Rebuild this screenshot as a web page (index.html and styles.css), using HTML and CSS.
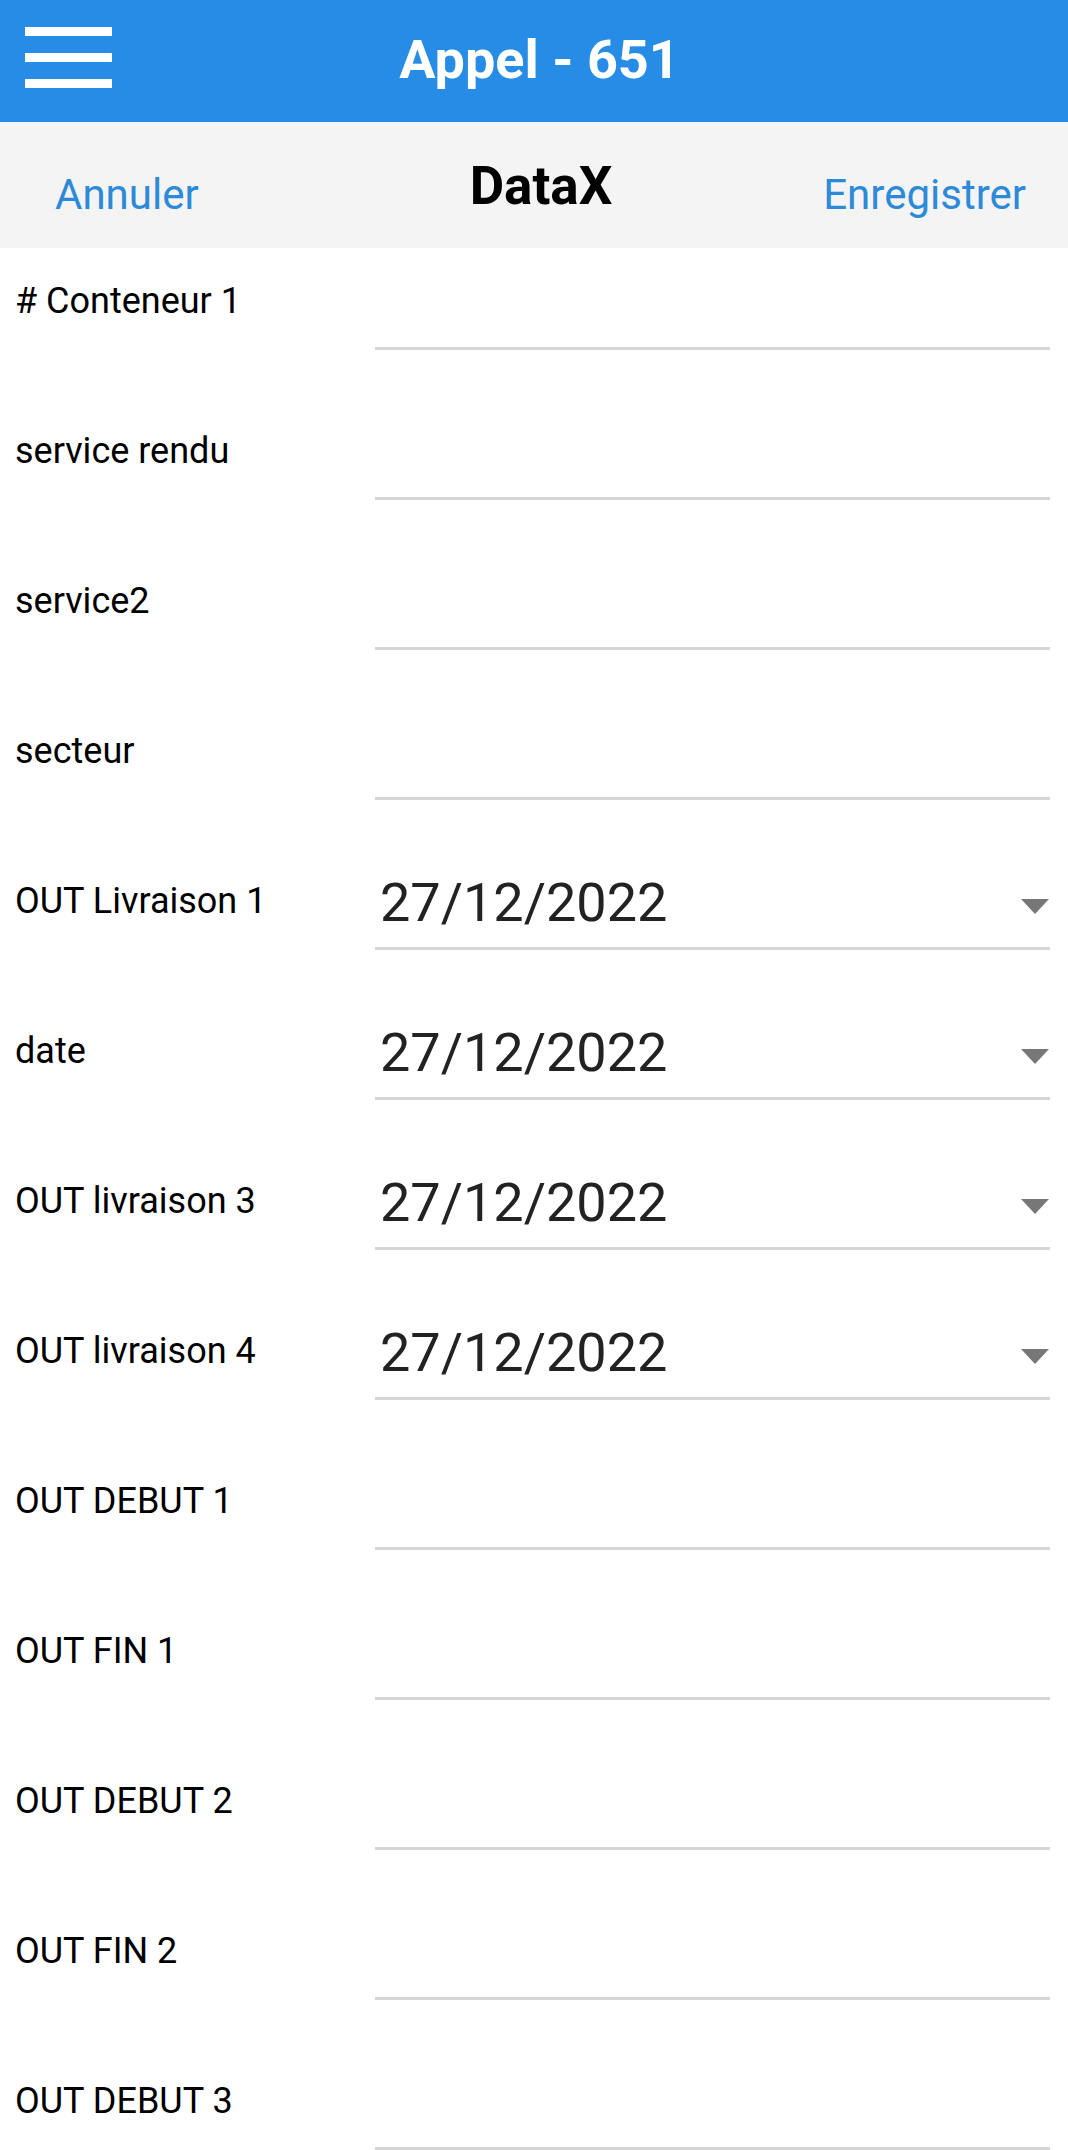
FILE: index.html
```html
<!DOCTYPE html>
<html lang="fr">
<head>
<meta charset="utf-8">
<title>Appel - 651</title>
<link rel="stylesheet" href="styles.css">
</head>
<body>
<header class="appbar">
  <div class="menu" aria-label="Menu">
    <span class="bar"></span>
    <span class="bar"></span>
    <span class="bar"></span>
  </div>
  <h1 class="app-title">Appel - 651</h1>
  <div></div>
</header>
<nav class="toolbar">
  <a class="tb-btn tb-left">Annuler</a>
  <div class="tb-title">DataX</div>
  <a class="tb-btn tb-right">Enregistrer</a>
</nav>
<main class="form">
  <div class="row"><div class="label"># Conteneur 1</div><div class="field"></div></div>
  <div class="row"><div class="label">service rendu</div><div class="field"></div></div>
  <div class="row"><div class="label">service2</div><div class="field"></div></div>
  <div class="row"><div class="label">secteur</div><div class="field"></div></div>
  <div class="row"><div class="label">OUT Livraison 1</div><div class="field date"><span class="value">27/12/2022</span><span class="caret"></span></div></div>
  <div class="row"><div class="label">date</div><div class="field date"><span class="value">27/12/2022</span><span class="caret"></span></div></div>
  <div class="row"><div class="label">OUT livraison 3</div><div class="field date"><span class="value">27/12/2022</span><span class="caret"></span></div></div>
  <div class="row"><div class="label">OUT livraison 4</div><div class="field date"><span class="value">27/12/2022</span><span class="caret"></span></div></div>
  <div class="row"><div class="label">OUT DEBUT 1</div><div class="field"></div></div>
  <div class="row"><div class="label">OUT FIN 1</div><div class="field"></div></div>
  <div class="row"><div class="label">OUT DEBUT 2</div><div class="field"></div></div>
  <div class="row"><div class="label">OUT FIN 2</div><div class="field"></div></div>
  <div class="row"><div class="label">OUT DEBUT 3</div><div class="field"></div></div>
</main>
</body>
</html>
```
FILE: styles.css
```css
* { box-sizing: border-box; }
html, body {
  margin: 0;
  padding: 0;
  background: #ffffff;
  font-family: Roboto, "Noto Sans", "Liberation Sans", sans-serif;
}

.appbar {
  display: grid;
  grid-template-columns: 1fr auto 1fr;
  height: 122px;
  background: #268ce6;
  color: #ffffff;
}
.menu {
  display: flex;
  flex-direction: column;
  gap: 17px;
  padding: 27px 0 0 25px;
}
.bar {
  display: block;
  width: 87px;
  height: 9px;
  background: #ffffff;
}
.app-title {
  margin: 0;
  padding-left: 11px;
  font-size: 54px;
  font-weight: 700;
  line-height: 120px;
  white-space: nowrap;
}

.toolbar {
  display: grid;
  grid-template-columns: 1fr auto 1fr;
  height: 126px;
  background: #f4f4f4;
}
.tb-btn {
  font-size: 42px;
  line-height: 50px;
  padding-top: 48px;
  color: #2d8ad9;
  white-space: nowrap;
}
.tb-left { padding-left: 55px; }
.tb-right { text-align: right; padding-right: 42px; }
.tb-title {
  font-size: 53px;
  font-weight: 700;
  line-height: 60px;
  padding-top: 34px;
  padding-left: 14px;
  color: #000000;
}

.form { display: flex; flex-direction: column; }
.row {
  display: flex;
  height: 150px;
  padding: 0 18px 0 15px;
}
.label {
  width: 360px;
  flex: none;
  font-size: 36px;
  line-height: 40px;
  padding-top: 33px;
  color: #000000;
  white-space: nowrap;
}
.field {
  flex: 1;
  height: 102px;
  border-bottom: 3px solid #d6d6d6;
}
.field.date {
  display: flex;
  justify-content: space-between;
  align-items: flex-start;
  padding-left: 5px;
}
.value {
  font-size: 54px;
  line-height: 60px;
  padding-top: 25px;
  color: #222222;
}
.caret {
  margin-top: 51px;
  margin-right: 1px;
  width: 0;
  height: 0;
  border-left: 14.5px solid transparent;
  border-right: 14.5px solid transparent;
  border-top: 15px solid #777777;
}
```
